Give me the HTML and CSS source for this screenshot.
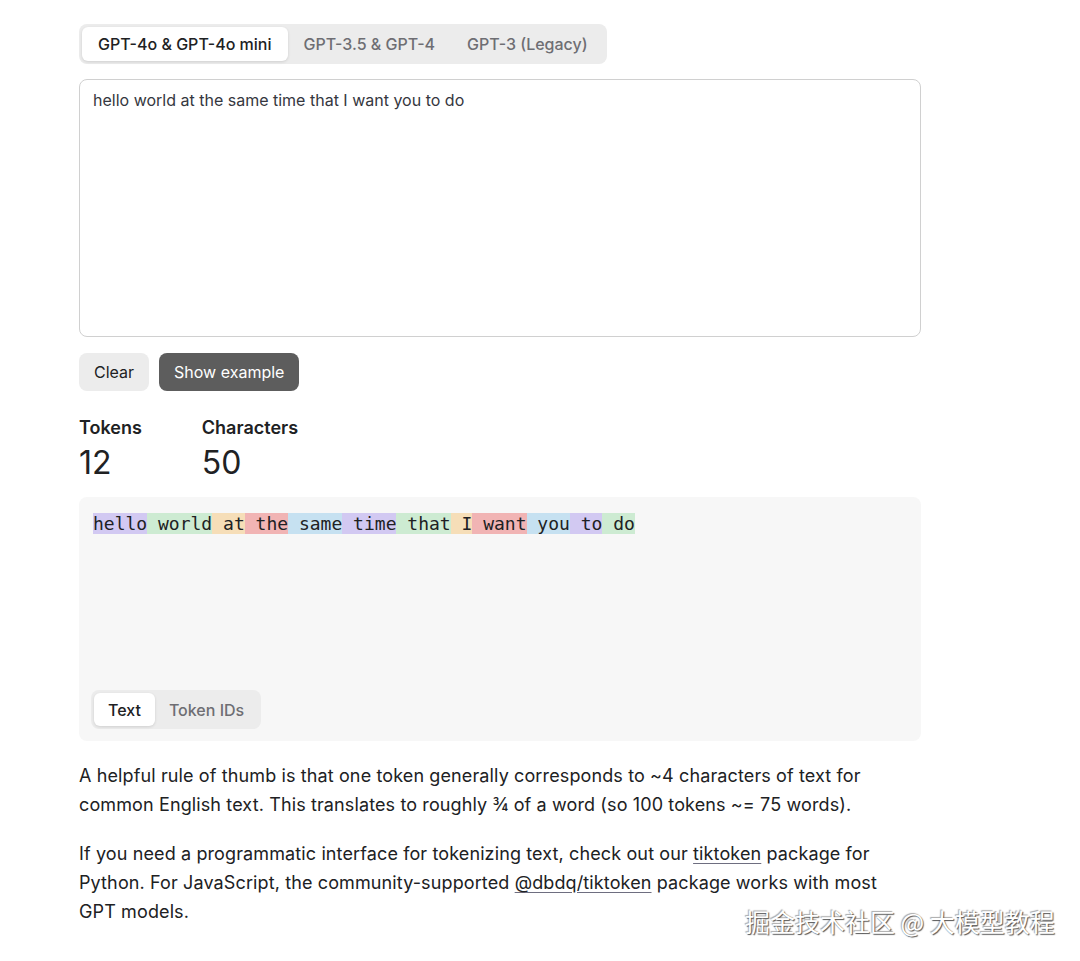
FILE: index.html
```html
<!DOCTYPE html>
<html lang="en">
<head>
    <meta charset="UTF-8">
    <title>Tokenizer</title>
    <link rel="stylesheet" href="styles.css">
</head>
<body>

<div class="page">
    <div class="tabs model-tabs">
        <button class="tab active">GPT-4o &amp; GPT-4o mini</button>
        <button class="tab">GPT-3.5 &amp; GPT-4</button>
        <button class="tab">GPT-3 (Legacy)</button>
    </div>

    <div class="input-box">hello world at the same time that I want you to do</div>

    <div class="actions">
        <button class="btn btn-light">Clear</button>
        <button class="btn btn-dark">Show example</button>
    </div>

    <div class="stats">
        <div class="stat">
            <div class="stat-label">Tokens</div>
            <div class="stat-value">12</div>
        </div>
        <div class="stat">
            <div class="stat-label">Characters</div>
            <div class="stat-value">50</div>
        </div>
    </div>

    <div class="output">
        <div class="tokens"><span class="t purple">hello</span><span class="t green"> world</span><span class="t orange"> at</span><span class="t red"> the</span><span class="t blue"> same</span><span class="t purple"> time</span><span class="t green"> that</span><span class="t orange"> I</span><span class="t red"> want</span><span class="t blue"> you</span><span class="t purple"> to</span><span class="t green"> do</span></div>

        <div class="tabs view-tabs">
            <button class="tab active">Text</button>
            <button class="tab">Token IDs</button>
        </div>
    </div>

    <p class="note">A helpful rule of thumb is that one token generally corresponds to ~4 characters of text for common English text. This translates to roughly ¾ of a word (so 100 tokens ~= 75 words).</p>

    <p class="note">If you need a programmatic interface for tokenizing text, check out our <a href="#">tiktoken</a> package for Python. For JavaScript, the community-supported <a href="#">@dbdq/tiktoken</a> package works with most GPT models.</p>
</div>

<div class="watermark">掘金技术社区 @ 大模型教程</div>

</body>
</html>
```

FILE: styles.css
```css
body {
    font-family: 'Inter', 'Noto Sans', sans-serif;
    background-color: white;
    color: #202123;
    margin: 0;
    padding: 0;
}

.page {
    width: 842px;
    padding: 24px 0 0 79px;
}

.tabs {
    display: inline-flex;
    background-color: #ececec;
    border-radius: 8px;
    padding: 3px;
}

.tab {
    font-family: inherit;
    background: none;
    border: none;
    color: #6e6e73;
    font-size: 16px;
    font-weight: 500;
    padding: 0 16px;
    height: 34px;
    border-radius: 6px;
    cursor: pointer;
}

.tab.active {
    background-color: white;
    color: #202123;
    box-shadow: 0 1px 3px rgba(0, 0, 0, 0.12);
}

.input-box {
    margin-top: 15px;
    height: 238px;
    border: 1px solid #d0d0d0;
    border-radius: 8px;
    padding: 9px 13px;
    font-size: 16px;
    line-height: 22px;
    color: #353740;
}

.actions {
    display: flex;
    gap: 10px;
    margin-top: 16px;
}

.btn {
    font-family: inherit;
    font-size: 16px;
    border: none;
    border-radius: 8px;
    height: 38px;
    padding: 0 15px;
    cursor: pointer;
}

.btn-light {
    background-color: #ececec;
    color: #202123;
}

.btn-dark {
    background-color: #5d5d5d;
    color: white;
}

.stats {
    display: flex;
    gap: 60px;
    margin-top: 26px;
}

.stat-label {
    font-size: 18px;
    line-height: 22px;
    font-weight: 600;
    color: #202123;
}

.stat-value {
    font-size: 32px;
    line-height: 40px;
    margin-top: 4px;
    color: #202123;
}

.output {
    margin-top: 14px;
    background-color: #f7f7f7;
    border-radius: 8px;
    height: 244px;
    padding: 16px 12px 12px 12px;
    box-sizing: border-box;
    display: flex;
    flex-direction: column;
    justify-content: space-between;
    align-items: flex-start;
}

.tokens {
    font-family: 'DejaVu Sans Mono', monospace;
    font-size: 18px;
    line-height: 22px;
    color: #202123;
    white-space: pre-wrap;
    padding-left: 2px;
}

.t.purple { background-color: #d2c9f2; }
.t.green { background-color: #cdebd2; }
.t.orange { background-color: #f6deb8; }
.t.red { background-color: #f1b4b4; }
.t.blue { background-color: #c6e1f1; }

.view-tabs .tab {
    padding: 0 14px;
    height: 33px;
}

.note {
    max-width: 830px;
    font-size: 18px;
    line-height: 29px;
    letter-spacing: 0.12px;
    color: #202123;
    margin: 20px 0 0;
}

.note a {
    color: #202123;
    text-decoration: underline;
    text-decoration-color: #6e6e80;
    text-underline-offset: 3px;
}

.watermark {
    position: absolute;
    left: 745px;
    top: 903px;
    font-family: 'Noto Sans CJK SC', sans-serif;
    font-size: 25px;
    color: white;
    text-shadow: 1px 1px 1px #555, -1px -1px 1px #aaa;
}
```
